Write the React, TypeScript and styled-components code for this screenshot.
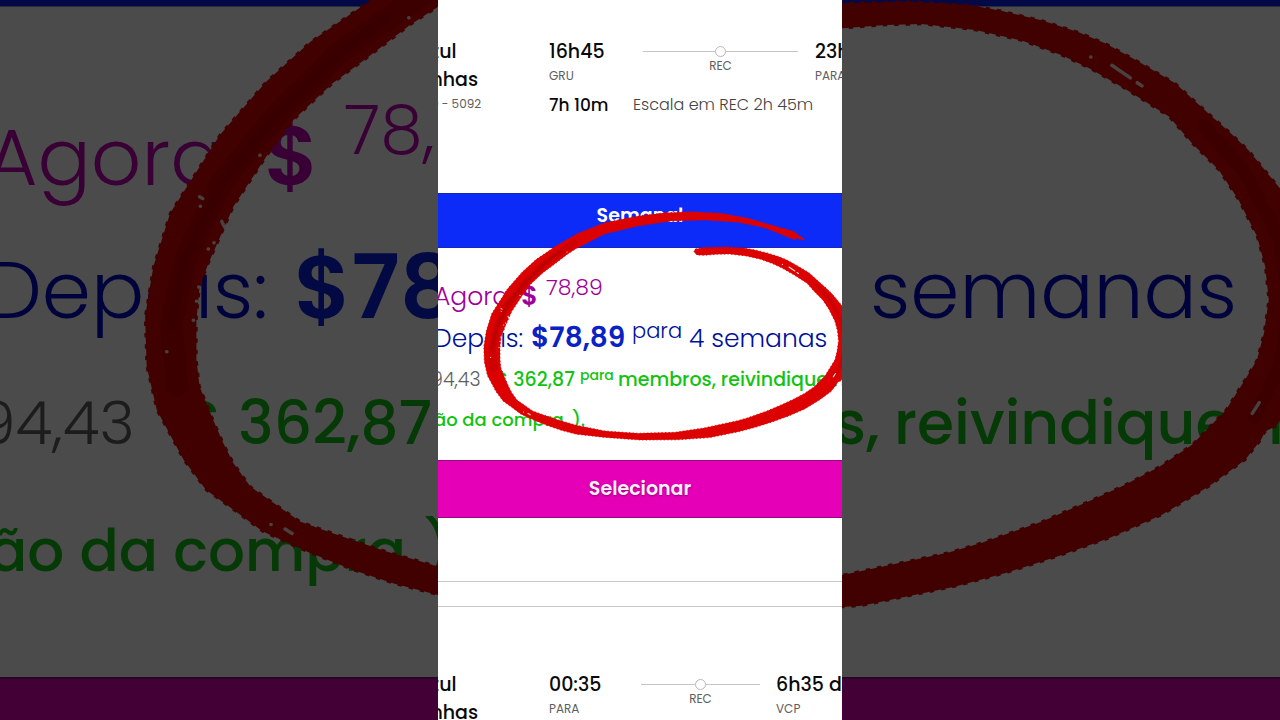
import React from "react";
import styled, { createGlobalStyle } from "styled-components";

const GlobalStyle = createGlobalStyle`
  *, *::before, *::after { box-sizing: border-box; }
  body {
    margin: 0;
    background: #4a4a4a;
    font-family: Poppins, Inter, "Liberation Sans", sans-serif;
    font-feature-settings: "cv11";
  }
  p, h2 { margin: 0; font-weight: inherit; }
`;

const magenta = "#a0009a";
const navy = "#00109c";
const royal = "#0a22c4";
const green = "#12c312";
const gray = "#5e5e5e";

const Stage = styled.div`
  display: flex;
  height: 100vh;
  overflow: hidden;
`;

const Backdrop = styled.aside`
  position: relative;
  flex: 1 1 0;
  min-width: 0;
  overflow: hidden;
  background: #ffffff;
  filter: brightness(0.294);
`;

const Screen = styled.main`
  position: relative;
  flex: 0 0 404px;
  overflow: hidden;
  background: #ffffff;
`;

const Flights = styled.div`
  padding-top: 37px;
`;

const Flight = styled.section`
  display: flex;
  height: 156px;
  padding-top: 1px;
`;

const Airline = styled.div`
  flex: 0 0 111px;
`;

const AirlineName = styled.h2`
  margin-left: -21px;
  font-size: 19px;
  line-height: 28px;
  font-weight: 500;
  color: #0a0a0a;
`;

const FlightCode = styled.p`
  margin-left: -16px;
  font-size: 12px;
  line-height: 20px;
  color: ${gray};
  white-space: nowrap;
`;

const Itinerary = styled.div`
  flex: 1;
  min-width: 0;
`;

const Legs = styled.div`
  display: flex;
  height: 53px;
`;

const Stop = styled.div<{ $w: number }>`
  flex: 0 0 ${(p) => p.$w}px;
  white-space: nowrap;
`;

const Time = styled.p`
  font-size: 19px;
  line-height: 28px;
  font-weight: 500;
  color: #0a0a0a;
`;

const Airport = styled.p`
  font-size: 12px;
  line-height: 20px;
  color: ${gray};
`;

const Route = styled.div<{ $w: number; $gap: number }>`
  flex: 0 0 ${(p) => p.$w}px;
  margin-right: ${(p) => p.$gap}px;
  padding-top: 8px;
  text-align: center;
`;

const Track = styled.div`
  display: flex;
  align-items: center;
  height: 10px;
  &::before, &::after {
    content: "";
    flex: 1;
    height: 1px;
    background: #c4c4c4;
  }
`;

const Dot = styled.span`
  width: 11px;
  height: 11px;
  border: 1px solid #b8b8b8;
  border-radius: 50%;
`;

const Summary = styled.div`
  display: flex;
  white-space: nowrap;
  line-height: 28px;
`;

const Duration = styled.span`
  flex: 0 0 84px;
  font-size: 17px;
  font-weight: 500;
  color: #0a0a0a;
`;

const Layover = styled.span`
  font-size: 16px;
  font-weight: 300;
  color: #444444;
`;

const PlanBand = styled.div`
  height: 55px;
  padding-top: 8px;
  border: solid #1626b8;
  border-width: 1px 0;
  background: #0c2bf8;
  color: #ffffff;
  font-size: 19px;
  line-height: 28px;
  font-weight: 600;
  text-align: center;
`;

const Offer = styled.div`
  height: 212px;
  padding-top: 28px;
`;

const Line = styled.p<{ $size: number; $color: string; $weight?: number; $h: number; $shift?: number }>`
  height: ${(p) => p.$h}px;
  margin-left: -${(p) => p.$shift ?? 0}px;
  font-size: ${(p) => p.$size}px;
  line-height: ${(p) => p.$h}px;
  font-weight: ${(p) => p.$weight ?? 300};
  color: ${(p) => p.$color};
  white-space: nowrap;
`;

const Cell = styled.span<{ $w: number; $color?: string; $weight?: number; $size?: number }>`
  display: inline-block;
  width: ${(p) => p.$w}px;
  color: ${(p) => p.$color ?? "inherit"};
  font-weight: ${(p) => p.$weight ?? "inherit"};
  font-size: ${(p) => (p.$size ? `${p.$size}px` : "inherit")};
  line-height: 1;
`;

const Raised = styled.sup<{ $w: number; $size: number; $up: number }>`
  display: inline-block;
  width: ${(p) => p.$w}px;
  font-size: ${(p) => p.$size}px;
  line-height: 1;
  vertical-align: ${(p) => p.$up}px;
`;

const SelectButton = styled.button`
  display: block;
  width: 100%;
  height: 58px;
  padding: 0 0 2px;
  border: solid #8f0c7c;
  border-width: 1px 0;
  background: #e500b8;
  color: #fff0fc;
  font: inherit;
  font-size: 19px;
  font-weight: 600;
  text-shadow: 0 1px 2px rgba(90, 0, 70, 0.6);
`;

const Divider = styled.div`
  height: 26px;
  margin: 63px 0;
  border: solid #c4c8c9;
  border-width: 1px 0;
`;

const BigBand = styled.div`
  height: 7px;
  background: #0a1ef0;
  border-bottom: 1px solid #8d96c8;
`;

const BigOffer = styled.div`
  height: 670px;
  padding-top: 84px;
`;

const BigSelect = styled.div`
  height: 60px;
  border-top: 2px solid #8f0c7c;
  background: #e500b8;
`;

const Overlay = styled.svg`
  position: absolute;
  top: 0;
  left: 0;
  width: 100%;
  height: auto;
  pointer-events: none;
`;

const ringPath =
  "M694 252L695 249L704 247.4L725 246.9L744 248L754 249.8L767 252.9L778.5 256.6L787 260.1L796.4 265.3L809 272.7L819.5 282.2L826 288L832 293.7L842 305.8L848 320L852 340L850 362L846 374L840.6 381L837.4 382.6L836 385.3L831 391.6L819.5 400L804.8 408.9L788 416.3L772 422L755.4 427.3L739.6 431.5L710 437.6L678 439.8L640 440L605 437.4L576.3 434.2L562 430.5L549.5 426.3L534.8 420.5L521 414.2L511.7 407.3L503 401L496 391.6L487.5 375.8L484.3 362L483.8 346.4L486.4 330.6L491.7 313.7L507.4 289L522 272.2L536 259.6L554.7 246.7L578 233.3L604.7 222.7L638 216L665 212.7L691 211.7L721 213.3L748 218.3L771 225L794.7 231.7L797 234L804.7 239.3L802 240L795 237.5L796 240L791 238.3L764.7 227.7L738 222.3L705 220L671 221L638 226L604.7 234L576.3 248.5L567.4 254.3L553.7 264.8L543 272.7L530.6 284.3L522 295.9L511.7 311.6L508 320L503.8 329.5L501 337L500 347.4L500 360L501 368.4L505.3 379L508.5 386.3L511.7 392.6L517 400L532.7 411L543 414.7L560 420.5L576.3 425.2L605 431L638 433.3L675 432.3L704 427.9L737.5 420.8L748 417.7L767 411L782.7 404.2L793 399.5L804 393.7L814.3 386.8L825 375.8L831.6 365.3L834.8 360L837 351.6L838.5 341L837.4 330.6L834.8 321L829 309.5L822.7 300L814.3 291.6L807 283.2L793 274.3L782 268L773 263.8L760.6 259.2L746 255.9L729 254L717.5 254.3L704 255.3L697 255Z";

function Ring({ viewBox }: { viewBox: string }) {
  return (
    <Overlay viewBox={viewBox} aria-hidden="true">
      <path d={ringPath} fill="#dc0202" stroke="#dc0202" strokeWidth="0.8" strokeDasharray="1.4 2.2" />
      <g fill="none" strokeLinecap="round" strokeLinejoin="round">
        <path d="M574 243L545 263L525 283L508 304L497 327L492 349L494 368" stroke="#a00000" strokeWidth="7" opacity="0.25" />
        <path d="M560 252L545 263L525 283L508 304L497 327L492 349" stroke="#a00000" strokeWidth="3" opacity="0.35" />
        <path d="M818 286L831 301L842 322L845 342L842 362L834 378" stroke="#a00000" strokeWidth="4" opacity="0.25" />
        <path
          d="M567 252h.1M520 295.4h.1M501 308.5l1 .6M501.2 311.5h.1M508 316.3l.8 1.6M505.5 323h.1M503.7 325h.1M500.7 337h.1M500 341.5h.1M499 347.5h.1M490.6 357.4h.1M523.5 412h.1M528 413.4l2.2 1.4M782.3 264.4h.1M789 267l5.8 4M797 272.5l1.5 1M835.5 373.5l-2.2 3.4"
          stroke="#ffffff"
          strokeWidth="1.1"
          opacity="0.85"
        />
      </g>
    </Overlay>
  );
}

type FlightProps = {
  depart: string;
  from: string;
  arrive: string;
  to: string;
  departWidth: number;
  routeWidth: number;
  routeGap: number;
  duration: string;
  layover: string;
};

function FlightCard(p: FlightProps) {
  return (
    <Flight>
      <Airline>
        <AirlineName>Azul<br />Linhas</AirlineName>
        <FlightCode>AD - 5092</FlightCode>
      </Airline>
      <Itinerary>
        <Legs>
          <Stop $w={p.departWidth}>
            <Time>{p.depart}</Time>
            <Airport>{p.from}</Airport>
          </Stop>
          <Route $w={p.routeWidth} $gap={p.routeGap}>
            <Track><Dot /></Track>
            <Airport>REC</Airport>
          </Route>
          <Stop $w={80}>
            <Time>{p.arrive}</Time>
            <Airport>{p.to}</Airport>
          </Stop>
        </Legs>
        <Summary>
          <Duration>{p.duration}</Duration>
          <Layover>{p.layover}</Layover>
        </Summary>
      </Itinerary>
    </Flight>
  );
}

export default function App() {
  return (
    <>
      <GlobalStyle />
      <Stage>
        <Backdrop>
          <BigBand />
          <BigOffer>
            <Line $size={79} $h={133} $shift={14} $color="#c000b0">
              <Cell $w={278}>Agora</Cell>
              <Cell $w={80} $weight={600} $size={84}>$</Cell>
              <Raised $w={130} $size={68} $up={31}>78,89</Raised>
            </Line>
            <Line $size={79} $h={133} $shift={14} $color="#0006c8">
              <Cell $w={308}>Depois:</Cell>
              <Cell $w={300} $weight={600} $size={88} $color="#0a1ee0">$78,89</Cell>
            </Line>
            <Line $size={60} $h={133} $shift={22} $color={green} $weight={500}>
              <Cell $w={206} $color={gray} $weight={300}>94,43</Cell>
              <Cell $w={54}>$</Cell>
              <Cell $w={200}>362,87</Cell>
            </Line>
            <Line $size={58} $h={121} $shift={12} $color={green} $weight={500}>
              <Cell $w={436}>ão da compra</Cell>
              <Cell $w={60}>).</Cell>
            </Line>
          </BigOffer>
          <BigSelect />
          <Ring viewBox="438 246.4 138.26 227.28" />
        </Backdrop>

        <Screen>
          <Flights>
            <FlightCard
              depart="16h45"
              from="GRU"
              arrive="23h50"
              to="PARA"
              departWidth={94}
              routeWidth={155}
              routeGap={17}
              duration="7h 10m"
              layover="Escala em REC 2h 45m"
            />
          </Flights>
          <PlanBand>Semanal</PlanBand>
          <Offer>
            <Line $size={25} $h={42} $shift={4} $color={magenta}>
              <Cell $w={87}>Agora</Cell>
              <Cell $w={25} $weight={600} $size={26}>$</Cell>
              <Raised $w={80} $size={22} $up={10}>78,89</Raised>
            </Line>
            <Line $size={25} $h={42} $shift={4} $color={navy}>
              <Cell $w={97}>Depois:</Cell>
              <Cell $w={101} $color={royal} $weight={600} $size={28}>$78,89</Cell>
              <Raised $w={57} $size={21} $up={9}>para</Raised>
              <Cell $w={150}>4 semanas</Cell>
            </Line>
            <Line $size={19} $h={40} $shift={7} $color={green} $weight={500}>
              <Cell $w={65} $color={gray} $weight={300}>94,43</Cell>
              <Cell $w={84}>$ 362,87</Cell>
              <Raised $w={38} $size={14} $up={6}>para</Raised>
              <Cell $w={240}>membros, reivindique na</Cell>
            </Line>
            <Line $size={18} $h={40} $shift={4} $color={green} $weight={500}>
              <Cell $w={138}>ão da compra</Cell>
              <Cell $w={20}>).</Cell>
            </Line>
          </Offer>
          <SelectButton type="button">Selecionar</SelectButton>
          <Divider />
          <FlightCard
            depart="00:35"
            from="PARA"
            arrive="6h35 do"
            to="VCP"
            departWidth={92}
            routeWidth={119}
            routeGap={16}
            duration="6h 00m"
            layover="Escala em REC"
          />
          <Ring viewBox="438 0 404 720" />
        </Screen>

        <Backdrop>
          <BigBand />
          <BigOffer>
            <Line $size={79} $h={133} $color={magenta} />
            <Line $size={79} $h={133} $color="#0006c8">
              <Cell $w={28} />
              <Cell $w={400}>semanas</Cell>
            </Line>
            <Line $size={60} $h={133} $shift={8} $color={green} $weight={500}>
              <Cell $w={60}>s,</Cell>
              <Cell $w={374}>reivindique</Cell>
              <Cell $w={60}>n</Cell>
            </Line>
          </BigOffer>
          <BigSelect />
          <Ring viewBox="703.8 246.4 138.26 227.28" />
        </Backdrop>
      </Stage>
    </>
  );
}
